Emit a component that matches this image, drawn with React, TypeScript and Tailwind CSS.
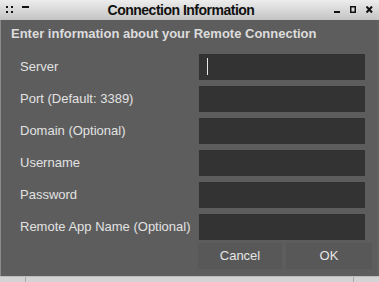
import { useState } from "react";

const fields = [
    "Server",
    "Port (Default: 3389)",
    "Domain (Optional)",
    "Username",
    "Password",
    "Remote App Name (Optional)",
];

function TitleBar() {
    return (
        <div className="h-[20px] flex items-center bg-gradient-to-b from-[#ededed] to-[#c4c4c4] text-black relative">
            {/* left window menu */}
            <svg width="8" height="8" className="absolute left-[6px] top-[6px]" viewBox="0 0 8 8">
                <rect x="0" y="0" width="2" height="2" fill="#111" />
                <rect x="5" y="0" width="2" height="2" fill="#111" />
                <rect x="0" y="5" width="2" height="2" fill="#111" />
                <rect x="5" y="5" width="2" height="2" fill="#111" />
            </svg>
            <svg width="8" height="4" className="absolute left-[22px] top-[5px]" viewBox="0 0 8 4">
                <rect x="0" y="1" width="7" height="2" fill="#111" />
            </svg>
            <div className="flex-1 pr-[17px] text-center font-bold text-[14px] tracking-[-0.5px] leading-[20px] text-[#111]">
                Connection Information
            </div>
            <svg width="8" height="8" className="absolute left-[334px] top-[6px]" viewBox="0 0 8 8">
                <rect x="0" y="5" width="6" height="2" fill="#111" />
            </svg>
            <svg width="8" height="8" className="absolute left-[350px] top-[6px]" viewBox="0 0 8 8">
                <rect x="0.75" y="0.75" width="4.5" height="5.5" fill="none" stroke="#111" strokeWidth="1.5" />
            </svg>
            <svg width="8" height="8" className="absolute left-[366px] top-[6px]" viewBox="0 0 8 8">
                <path d="M0.5 0.5 L6 6.5 M6 0.5 L0.5 6.5" stroke="#111" strokeWidth="2" />
            </svg>
        </div>
    );
}

function App() {
    const [values, setValues] = useState<string[]>(fields.map(() => ""));

    return (
        <div
            className="w-[379px] h-[282px] flex flex-col overflow-hidden bg-[#5d5d5d]"
            style={{ fontFamily: '"Liberation Sans", Arial, sans-serif' }}
        >
            <TitleBar />
            <div className="flex-1 flex flex-col border-l border-[#8a8a8a] border-r-2 border-r-[#616161]">
                <h1 className="pt-[6px] pl-[10px] text-[13px] leading-[16px] font-bold text-[#dcdcdc]">
                    Enter information about your Remote Connection
                </h1>

                <div className="mt-[12px] flex flex-col gap-[6px]">
                    {fields.map((label, i) => (
                        <div key={label} className="flex items-center h-[26px]">
                            <span className="w-[198px] pl-[19px] text-[13px] text-[#e2e2e2]">{label}</span>
                            <div className="relative w-[166px] h-[26px] bg-[#333333]">
                                <input
                                    value={values[i]}
                                    onChange={(e) => {
                                        const next = [...values];
                                        next[i] = e.target.value;
                                        setValues(next);
                                    }}
                                    className="w-full h-full bg-transparent px-[8px] text-[13px] text-white outline-none"
                                />
                                {i === 0 && (
                                    <span className="absolute left-[8px] top-[4px] w-[1px] h-[17px] bg-[#e8e8e8]" />
                                )}
                            </div>
                        </div>
                    ))}
                </div>

                <div className="mt-[3px] flex pl-[197px] gap-[4px]">
                    <button className="w-[84px] h-[26px] bg-[#585858] text-[13px] text-[#e6e6e6]">Cancel</button>
                    <button className="w-[86px] h-[26px] bg-[#585858] text-[13px] text-[#e6e6e6]">OK</button>
                </div>
            </div>
            <div className="h-[6px] flex bg-[#d3d3d3] border-t border-[#bdbdbd]">
                <div className="w-[26px] border-r border-[#a8a8a8]" />
                <div className="flex-1" />
                <div className="w-[26px] border-l border-[#a8a8a8]" />
            </div>
        </div>
    );
}

export default App;
